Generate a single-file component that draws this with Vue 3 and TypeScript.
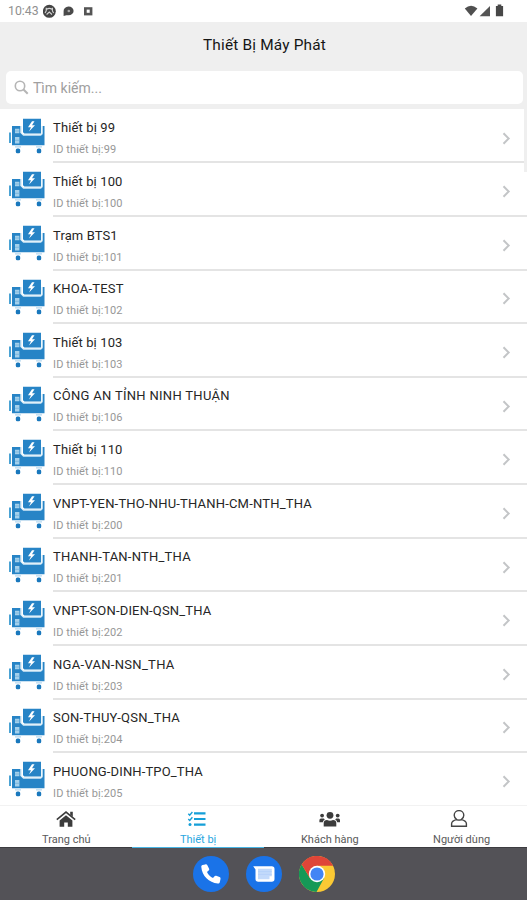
<script setup lang="ts">
interface Device {
  name: string
  id: number
  spacing: number
}

const devices: Device[] = [
  { name: 'Thiết bị 99', id: 99, spacing: 0.13 },
  { name: 'Thiết bị 100', id: 100, spacing: 0.12 },
  { name: 'Trạm BTS1', id: 101, spacing: 0.1 },
  { name: 'KHOA-TEST', id: 102, spacing: 0.2 },
  { name: 'Thiết bị 103', id: 103, spacing: 0.12 },
  { name: 'CÔNG AN TỈNH NINH THUẬN', id: 106, spacing: 0.3 },
  { name: 'Thiết bị 110', id: 110, spacing: 0.12 },
  { name: 'VNPT-YEN-THO-NHU-THANH-CM-NTH_THA', id: 200, spacing: 0.19 },
  { name: 'THANH-TAN-NTH_THA', id: 201, spacing: 0.23 },
  { name: 'VNPT-SON-DIEN-QSN_THA', id: 202, spacing: 0.17 },
  { name: 'NGA-VAN-NSN_THA', id: 203, spacing: 0.3 },
  { name: 'SON-THUY-QSN_THA', id: 204, spacing: 0.22 },
  { name: 'PHUONG-DINH-TPO_THA', id: 205, spacing: 0.14 },
]
</script>

<template>
  <div class="screen">
    <header class="status">
      <span class="clock">10:43</span>
      <svg class="notices" width="54" height="16" viewBox="0 0 54 16">
        <circle cx="6.3" cy="8.3" r="6.5" fill="#444" />
        <path d="M3.2 4.8v3.1L2 10M9.4 4.8v3.1l1.2 2.1M3.6 6.3Q6.3 4.5 9 6.3M3.6 11.5l2.7-2.4L9 11.5" fill="none" stroke="#d5d5d5" stroke-width="1.1" />
        <path d="M20.6 13V8.2a5 4.4 0 1 1 4.8 4.1h-2z" fill="#4a4a4a" />
        <circle cx="25.8" cy="8" r="1.3" fill="#aaa" />
        <path d="M41 4.2h8.4v8.2H41z" fill="#555" />
        <path d="M43.7 6.6h3v3.2h-3z" fill="#fff" />
      </svg>
      <svg class="signals" width="42" height="14" viewBox="0 0 42 14">
        <path d="M.8 4.5Q7-.9 13.4 4.5L7 12z" fill="#505050" />
        <path d="M26 2v10.2H15.6z" fill="#555" />
        <path d="M33.7.5h3.6V2h1.8v10.2h-7.2V2h1.8z" fill="#484848" />
      </svg>
    </header>

    <section class="heading">
      <h1>Thiết Bị Máy Phát</h1>
      <div class="search">
        <svg width="15" height="15" viewBox="0 0 15 15">
          <circle cx="6" cy="6" r="4.7" fill="none" stroke="#b5b5b5" stroke-width="1.6" />
          <path d="m9.5 9.5 4.2 4.2" stroke="#b5b5b5" stroke-width="2" />
        </svg>
        <span>Tìm kiếm...</span>
      </div>
    </section>

    <main class="list">
      <article v-for="d in devices" :key="d.id" class="row">
        <svg class="generator" width="36" height="37" viewBox="0 0 36 37">
          <path d="M0 14.5h2V25H0z" fill="#4ba3d4" />
          <path d="M3 8h8.5v7l2.5 2.5h17.5q2 0 2-2V8h2v19.3H3z" fill="#2784c6" />
          <path d="M12 8v6.8l2.2 2.2h17.3q1.7 0 1.7-1.7V8" fill="none" stroke="#c3e1f3" stroke-width="1" />
          <path d="M14 .8h18V15.6H15.4L14 14.3z" fill="#2784c6" />
          <path d="M6 10.7h4.4v4.5H6zM6 19h4.4v6.5H6z" fill="#a4d0eb" />
          <path d="M6 13h4.4M6 22.3h4.4" stroke="#71b2dc" stroke-width=".8" />
          <path d="m23 3.2-4 6h3L20 13.5l6-6.3h-3l2.5-4z" fill="#fff" />
          <rect x="6.8" y="30.4" width="4.4" height="4.8" rx="1.5" fill="#1978bd" />
          <rect x="27.8" y="30.4" width="4.4" height="4.8" rx="1.5" fill="#1978bd" />
          <path d="M6 28.8h6M27 28.8h6" stroke="#b5d8ef" stroke-width="1.2" />
        </svg>
        <div class="details">
          <div class="texts">
            <div class="name" :style="{ letterSpacing: d.spacing + 'px' }">{{ d.name }}</div>
            <div class="ident">ID thiết bị:{{ d.id }}</div>
          </div>
          <svg class="chevron" width="9" height="13" viewBox="0 0 9 13">
            <path d="m1.5 1.3 5.2 5.2-5.2 5.2" fill="none" stroke="#c3c5c7" stroke-width="2" />
          </svg>
        </div>
      </article>
      <i class="scrollbar"></i>
    </main>

    <nav class="tabs">
      <div class="tab">
        <svg width="22" height="18" viewBox="0 0 22 18">
          <path d="m1.8 9.6 9.2-7.5 9.2 7.5" fill="none" stroke="#3c3c3c" stroke-width="1.6" />
          <path d="M15.2 1.8h2.6v5l-2.6-2zM4.6 10.4 11 5.2l6.4 5.2v6.4h-4.6v-4.4H9.2v4.4H4.6z" fill="#3c3c3c" />
        </svg>
        <span>Trang chủ</span>
      </div>
      <div class="tab active">
        <svg width="22" height="18" viewBox="0 0 22 18">
          <path d="M7 3.4h11.5M7 9h11.5M7 14.6h11.5" stroke="#159fd8" stroke-width="2.1" />
          <path d="m1.3 3.7 1.4 1.4L5.4 2M1.3 9l1.4 1.4 2.7-3.1" fill="none" stroke="#159fd8" stroke-width="1.4" />
          <circle cx="3" cy="14.6" r="1.5" fill="#159fd8" />
        </svg>
        <span>Thiết bị</span>
      </div>
      <div class="tab">
        <svg width="22" height="18" viewBox="0 0 22 18">
          <g fill="#3c3c3c">
            <circle cx="12" cy="5.3" r="3.4" />
            <circle cx="4.1" cy="5.6" r="1.9" />
            <circle cx="19.7" cy="5.6" r="1.9" />
            <path d="M5.7 16.5v-3.4q0-3.1 3.3-3.1 3 1.4 6 0 3.3 0 3.3 3.1v3.4zM1.4 12.2v-1.9q0-1.7 1.6-1.7h2.8l1 .8Q5 10.5 4.8 12.2zM22 12.2v-1.9q0-1.7-1.4-1.7h-2.4l-1 .8q1.8 1.1 2 2.8z" />
          </g>
        </svg>
        <span>Khách hàng</span>
      </div>
      <div class="tab">
        <svg width="22" height="18" viewBox="0 0 22 18">
          <path d="M6.8 9.6C5 8.5 4.2 6.8 4.2 5.2a4.8 4.6 0 0 1 9.6 0c0 1.6-.8 3.3-2.6 4.4 3.2.7 5.2 1.8 5.2 4.2v2.5H1.6v-2.5c0-2.4 2-3.5 5.2-4.2q2.2 1 4.4 0" fill="none" stroke="#444" stroke-width="1.4" />
        </svg>
        <span>Người dùng</span>
      </div>
    </nav>

    <footer class="dock">
      <svg width="36" height="36" viewBox="0 0 36 36">
        <circle cx="18" cy="18" r="18" fill="#1a73e8" />
        <path d="M12.2 8.4 9.6 9c-1 .3-1.4 1-1.3 2 .7 8.8 7.7 15.8 16.5 16.5 1 .1 1.8-.4 2-1.3l.7-3.2c.2-.9-.2-1.6-1-1.9l-3.3-1.3c-.8-.3-1.4 0-1.9.6l-1.3 1.7c-2.8-1.4-4.7-3.4-6-6.1l1.6-1.4c.6-.5.8-1.1.5-1.9l-1.6-3.3c-.4-.8-1.1-1.2-2.3-1z" fill="#fff" />
      </svg>
      <svg width="36" height="36" viewBox="0 0 36 36">
        <circle cx="18" cy="18" r="18" fill="#1a73e8" />
        <path d="M7.2 10.3h18.6q2.7 0 2.7 2.7v10q0 2.7-2.7 2.7H12.2q-2.7 0-2.7-2.7v-9.5z" fill="#fff" />
        <path d="M12 12.8h13.8v7.4h-2.3v3H12z" fill="#c3dafb" />
        <path d="M12 15.6h13.8M12 18.4h13.8" stroke="#b3cff9" stroke-width=".8" />
      </svg>
      <svg width="36" height="36" viewBox="0 0 36 36">
        <circle cx="18" cy="18" r="18" fill="#fbc934" />
        <path d="M18 18 10.9 22.1 2.7 8.5A18 18 0 0 0 17.5 36l7.6-13.9z" fill="#159957" />
        <path d="M18 9.8h16.1A18 18 0 0 0 2.7 8.5L10.9 22.1 18 18z" fill="#df4538" />
        <circle cx="18" cy="18" r="8.2" fill="#fff" />
        <circle cx="18" cy="18" r="6.6" fill="#4285f4" />
      </svg>
    </footer>
  </div>
</template>

<style>
body {
  margin: 0;
}
</style>

<style scoped>
.screen {
  display: flex;
  flex-direction: column;
  width: 527px;
  height: 900px;
  overflow: hidden;
  background: #fff;
  font-family: Roboto, "Noto Sans", sans-serif;
}
.status {
  display: flex;
  flex: none;
  box-sizing: border-box;
  height: 22px;
  padding: 3px 21px 0 8px;
}
.clock {
  width: 35px;
  color: #909090;
  font-size: 12.3px;
  line-height: 17px;
}
.signals {
  margin: 1px 0 0 auto;
}
.heading {
  flex: none;
  box-sizing: border-box;
  height: 87px;
  padding: 0 4px 0 6px;
  background: #efefef;
}
h1 {
  margin: 0;
  padding-top: 13px;
  height: 36px;
  color: #151515;
  font-size: 15.4px;
  font-weight: 400;
  letter-spacing: 0.18px;
  line-height: 21px;
  text-align: center;
}
.search {
  display: flex;
  align-items: center;
  gap: 4px;
  height: 33px;
  padding-left: 8px;
  border-radius: 5px;
  background: #fff;
  color: #a0a0a0;
  font-size: 14px;
}
.list {
  position: relative;
  flex: none;
  box-sizing: border-box;
  height: 696px;
  padding-top: 0.7px;
  overflow: hidden;
}
.row {
  display: flex;
  height: 53.63px;
  padding-left: 9px;
}
.generator {
  flex: none;
  margin-top: 8px;
}
.details {
  display: flex;
  flex: 1;
  align-items: center;
  justify-content: space-between;
  box-sizing: border-box;
  margin-left: 8px;
  padding-right: 16px;
  border-bottom: 2px solid #e4e4e4;
}
.row:nth-last-child(2) .details {
  border-bottom-color: transparent;
}
.texts {
  padding-top: 6.5px;
  white-space: nowrap;
}
.name {
  color: #262626;
  font-size: 13px;
  line-height: 18px;
}
.ident {
  margin-top: 5px;
  color: #979797;
  font-size: 11px;
  letter-spacing: 0.14px;
  line-height: 16px;
}
.chevron {
  margin-top: 5px;
}
.scrollbar {
  position: absolute;
  top: 0;
  right: 0;
  width: 3px;
  height: 63px;
  background: #efefef;
}
.tabs {
  display: flex;
  flex: none;
  box-sizing: border-box;
  height: 43px;
  border-top: 1px solid #f2f2f2;
}
.tab {
  display: flex;
  flex: 1;
  flex-direction: column;
  align-items: center;
  box-sizing: border-box;
  padding-top: 4px;
  border-bottom: 1px solid #3c3c40;
  color: #5a5a5a;
  font-size: 11px;
  line-height: 14px;
}
.tab span {
  margin-top: 5px;
  padding-left: 1px;
}
.tab.active {
  border-bottom-color: #48b5e4;
  color: #2aa7df;
}
.dock {
  display: flex;
  flex: 1;
  gap: 17px;
  align-items: flex-start;
  justify-content: center;
  padding: 8px 0 0;
  background: #535257;
}
</style>
